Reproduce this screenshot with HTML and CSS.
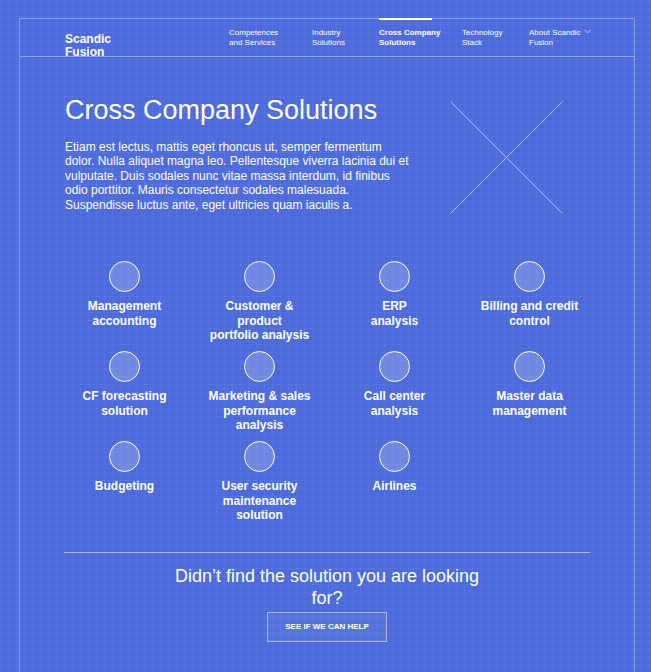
FILE: index.html
```html
<!DOCTYPE html>
<html lang="en">
<head>
<meta charset="utf-8">
<title>Cross Company Solutions – Scandic Fusion</title>
<link rel="stylesheet" href="styles.css">
</head>
<body>
<div class="page">
  <header class="header">
    <div class="logo">Scandic<br>Fusion</div>
    <nav class="nav">
      <a class="nav-item w-a" href="#">Competences<br>and Services</a>
      <a class="nav-item w-b" href="#">Industry<br>Solutions</a>
      <a class="nav-item w-a active" href="#">Cross Company<br>Solutions</a>
      <a class="nav-item w-b" href="#">Technology<br>Stack</a>
      <a class="nav-item" href="#">About Scandic <svg class="chev" width="7" height="5" viewBox="0 0 7 5"><path d="M0.5 0.8 L3.5 3.8 L6.5 0.8" fill="none" stroke="rgba(255,255,255,0.8)" stroke-width="0.8"/></svg><br>Fusion</a>
    </nav>
  </header>

  <section class="hero">
    <div class="hero-text">
      <h1 class="title">Cross Company Solutions</h1>
      <p class="lead">Etiam est lectus, mattis eget rhoncus ut, semper fermentum dolor. Nulla aliquet magna leo. Pellentesque viverra lacinia dui et vulputate. Duis sodales nunc vitae massa interdum, id finibus odio porttitor. Mauris consectetur sodales malesuada. Suspendisse luctus ante, eget ultricies quam iaculis a.</p>
    </div>
    <svg class="placeholder" width="113" height="113" viewBox="0 0 113 113">
      <line x1="0.5" y1="0.5" x2="112.5" y2="112.5" stroke="rgba(255,255,255,0.55)" stroke-width="1"/>
      <line x1="112.5" y1="0.5" x2="0.5" y2="112.5" stroke="rgba(255,255,255,0.55)" stroke-width="1"/>
    </svg>
  </section>

  <section class="solutions">
    <div class="sol"><span class="dot"></span><span class="label">Management<br>accounting</span></div>
    <div class="sol"><span class="dot"></span><span class="label">Customer &amp;<br>product<br>portfolio analysis</span></div>
    <div class="sol"><span class="dot"></span><span class="label">ERP<br>analysis</span></div>
    <div class="sol"><span class="dot"></span><span class="label">Billing and credit<br>control</span></div>
    <div class="sol"><span class="dot"></span><span class="label">CF forecasting<br>solution</span></div>
    <div class="sol"><span class="dot"></span><span class="label">Marketing &amp; sales<br>performance<br>analysis</span></div>
    <div class="sol"><span class="dot"></span><span class="label">Call center<br>analysis</span></div>
    <div class="sol"><span class="dot"></span><span class="label">Master data<br>management</span></div>
    <div class="sol"><span class="dot"></span><span class="label">Budgeting</span></div>
    <div class="sol"><span class="dot"></span><span class="label">User security<br>maintenance<br>solution</span></div>
    <div class="sol"><span class="dot"></span><span class="label">Airlines</span></div>
  </section>

  <hr class="divider">

  <section class="cta">
    <h2 class="cta-title">Didn’t find the solution you are looking for?</h2>
    <a class="cta-btn" href="#">SEE IF WE CAN HELP</a>
  </section>
</div>
</body>
</html>
```

FILE: styles.css
```css
html, body {
  margin: 0;
  padding: 0;
}

body {
  background-color: #4d6bdc;
  background-image:
    linear-gradient(to right, rgba(255,255,255,0.045) 1px, transparent 1px),
    linear-gradient(to bottom, rgba(255,255,255,0.045) 1px, transparent 1px);
  background-size: 8px 8px;
  font-family: "Liberation Sans", Arial, sans-serif;
  color: #fff;
  min-height: 672px;
  overflow: hidden;
}

.page {
  margin: 18px 0 0 19px;
  width: 614px;
  min-height: 654px;
  border-left: 1px solid rgba(255,255,255,0.35);
  border-right: 1px solid rgba(255,255,255,0.35);
}

/* header */
.header {
  display: flex;
  height: 37px;
  border-top: 1px solid rgba(255,255,255,0.35);
  border-bottom: 1px solid rgba(255,255,255,0.35);
}

.logo {
  width: 209px;
  padding: 14px 0 0 45px;
  box-sizing: border-box;
  font-size: 12px;
  line-height: 13px;
  font-weight: bold;
  flex-shrink: 0;
  height: 40px;
}

.nav {
  display: flex;
  padding-top: 9px;
}

.nav-item {
  position: relative;
  color: #fff;
  text-decoration: none;
  font-size: 8px;
  line-height: 9.7px;
  white-space: nowrap;
}

.nav-item.w-a { width: 83px; }
.nav-item.w-b { width: 67px; }

.nav-item.active {
  font-weight: bold;
}

.nav-item.active::before {
  content: "";
  position: absolute;
  left: 0;
  top: -10px;
  width: 53px;
  height: 2px;
  background: #fff;
}

.chev {
  vertical-align: 1px;
  margin-left: 1px;
}

/* hero */
.hero {
  display: flex;
  align-items: flex-start;
  padding: 0 0 0 45px;
}

.hero-text {
  width: 347px;
  flex-shrink: 0;
}

.title {
  margin: 38px 0 0;
  font-size: 27px;
  line-height: 31px;
  font-weight: normal;
}

.lead {
  margin: 14px 0 0;
  font-size: 12px;
  line-height: 14.4px;
}

.placeholder {
  display: block;
  margin: 44px 0 0 38px;
  flex-shrink: 0;
}

/* solutions grid */
.solutions {
  display: grid;
  grid-template-columns: repeat(4, 135px);
  grid-auto-rows: 81.5px;
  row-gap: 8.5px;
  margin: 47px 0 0 37px;
}

.sol {
  display: flex;
  flex-direction: column;
  align-items: center;
  gap: 7px;
}

.dot {
  display: block;
  flex-shrink: 0;
  width: 29px;
  height: 29px;
  border: 1px solid #fff;
  border-radius: 50%;
  background: rgba(255,255,255,0.2);
}

.label {
  flex-shrink: 0;
  font-size: 12px;
  line-height: 14.5px;
  font-weight: bold;
  text-align: center;
  white-space: nowrap;
}

/* divider */
.divider {
  margin: 29px 44px 0;
  border: 0;
  height: 1px;
  background: rgba(255,255,255,0.5);
}

/* cta */
.cta {
  display: flex;
  flex-direction: column;
  align-items: center;
}

.cta-title {
  margin: 12px 0 0;
  max-width: 320px;
  font-size: 18px;
  line-height: 22.5px;
  font-weight: normal;
  text-align: center;
}

.cta-btn {
  display: flex;
  align-items: center;
  justify-content: center;
  margin-top: 2px;
  width: 120px;
  height: 30px;
  box-sizing: border-box;
  border: 1px solid rgba(255,255,255,0.5);
  background: rgba(255,255,255,0.05);
  color: #fff;
  text-decoration: none;
  font-size: 8px;
  font-weight: bold;
}
```
